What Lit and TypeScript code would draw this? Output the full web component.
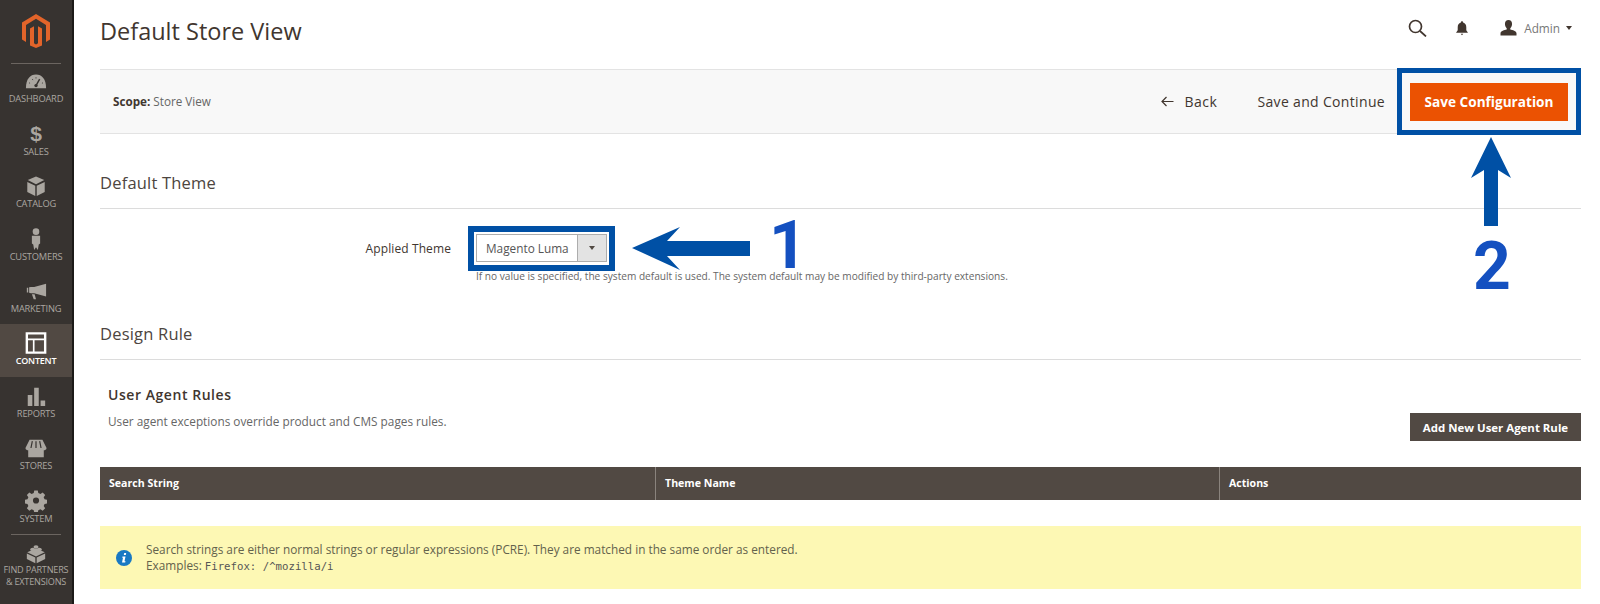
import { LitElement, html, css, svg } from "lit";
import { customElement } from "lit/decorators.js";

const navItems = [
  { label: ["DASHBOARD"], icon: svg`<path d="M1 20C1 10 5.500 5 12 5s11 5 11 15z" fill="currentColor"/><path d="M12 17l4-7" stroke="#373330" stroke-width="1.600"/><circle cx="12" cy="17" r="1.800" fill="#373330"/><path d="M4.500 14l1 .5M8 10l.7 1M12 8v1.200M19.500 14l-1 .5" stroke="#373330" stroke-width="1"/>` },
  { label: ["SALES"], icon: svg`<text x="12" y="20" text-anchor="middle" font-family="'Liberation Sans',sans-serif" font-weight="700" font-size="23" fill="currentColor">$</text>` },
  { label: ["CATALOG"], icon: svg`<path d="M12 1.500l9 4-9 4.500-9-4.500z" fill="currentColor"/><path d="M2.500 7.500l8.700 4.300V23l-8.700-4.500zM21.500 7.500l-8.700 4.300V23l8.700-4.500z" fill="currentColor"/>` },
  { label: ["CUSTOMERS"], icon: svg`<circle cx="12" cy="4" r="3.600" fill="currentColor"/><path d="M7.500 8.500h9V17l-1.500 1-1 6-2-3-2 3-1-6-1.500-1z" fill="currentColor"/>` },
  { label: ["MARKETING"], icon: svg`<path d="M23 4v14L10 14.500H6.500l-2-.5V8l2-.5H10z" fill="currentColor"/><path d="M2 8.500h1.500V13.500H2zM7.500 15.500h3l1.500 5.500H9.500z" fill="currentColor"/>` },
  { label: ["CONTENT"], active: true, icon: svg`<path d="M2 1.500h20v21H2z" fill="none" stroke="currentColor" stroke-width="2.600"/><path d="M2 8h20M9.500 8V22" stroke="currentColor" stroke-width="1.800"/>` },
  { label: ["REPORTS"], icon: svg`<path d="M3 11h5v12H3zM10 3h5v20h-5zM17 17h5v6h-5z" fill="currentColor"/>` },
  { label: ["STORES"], icon: svg`<path d="M5 3h14l4.500 9c0 2-2 2.500-3 2.500V22h-17v-7.500c-1 0-3-.5-3-2.500z" fill="currentColor"/><path d="M8 4.500l-1.500 7.500M12 4.500V12M16 4.500l1.500 7.500" stroke="#373330" stroke-width="1.300"/>` },
  { label: ["SYSTEM"], icon: svg`<path fill-rule="evenodd" fill="currentColor" d="M10 1h4l.6 3 2.400 1 2.600-1.700 2.800 2.800-1.700 2.600 1 2.400 3 .6v4l-3 .6-1 2.400 1.700 2.600-2.800 2.800-2.600-1.700-2.400 1-.6 3h-4l-.6-3-2.400-1-2.600 1.700-2.800-2.800 1.700-2.600-1-2.400-3-.6v-4l3-.6 1-2.400-1.700-2.600 2.800-2.800L7 5l2.400-1zM12 9a3.500 3.500 0 100 7 3.500 3.500 0 000-7z" transform="translate(.5 -.5) scale(.96)"/>` },
];

const divider = html`<div class="rule"></div>`;

@customElement("app-root")
export class AppRoot extends LitElement {
  static styles = css`
    :host { display: block; width: 1600px; height: 604px; overflow: hidden; position: relative; background: #fff; font-family: "Open Sans", sans-serif; color: #41362f; }
    .page { display: flex; height: 604px; }
    .side { width: 72px; flex: none; background: #373330; border-right: 2px solid #1c1a18; display: flex; flex-direction: column; align-items: stretch; }
    .logo { height: 63px; display: flex; justify-content: center; padding-top: 14px; box-sizing: border-box; flex: none; }
    .rule { height: 1px; background: #6b6560; margin: 0 11px; flex: none; position: relative; z-index: 1; }
    .nav { display: flex; flex-direction: column; height: 52.400px; align-items: center; flex: none; padding-top: 8px; box-sizing: border-box; color: #aaa6a0; font-size: 9.300px; line-height: 12px; letter-spacing: -0.2px; }
    .nav svg { width: 22px; height: 22px; margin-bottom: 1px; flex: none; }
    .nav.active { background: #514943; color: #fff; font-weight: 600; font-size: 9px; }
    .nav.first { margin-top: -1.600px; }
    .nav.last { height: 64px; padding-top: 9px; font-size: 9.100px; }
    .nav.last svg { width: 20px; height: 20px; margin-bottom: 0; }
    .nav.last span { white-space: nowrap; }
    .main { flex: 1; min-width: 0; padding: 0 19px 0 26px; display: flex; flex-direction: column; }
    .top { height: 69px; display: flex; align-items: center; flex: none; }
    .title { font-size: 23.500px; font-weight: 400; color: #41362f; margin: 0 0 6px; flex: 1; line-height: 1; }
    .top-icons { display: flex; align-items: center; padding: 0 9px 13px 0; color: #41362f; }
    .top-icons .search { width: 19px; height: 18px; margin-right: 29px; }
    .top-icons .bell { width: 12px; height: 15px; margin-right: 32px; }
    .top-icons .user { width: 17px; height: 16px; margin-right: 7px; }
    .admin { font-size: 11.800px; color: #777; }
    .caret { width: 0; height: 0; border: 3.500px solid transparent; border-top: 4px solid #41362f; border-bottom: 0; margin: 0 0 0 6px; }
    .bar { height: 65px; flex: none; box-sizing: border-box; background: #f8f8f8; border-top: 1px solid #e3e3e3; border-bottom: 1px solid #e3e3e3; display: flex; align-items: center; padding: 0 13px; font-size: 11.700px; color: #666; margin-bottom: 37px; }
    .bar b { color: #41362f; font-weight: 700; }
    .scope { flex: 1; padding-bottom: 1px; }
    .act { font-size: 14px; color: #41362f; letter-spacing: 0.33px; display: flex; align-items: center; }
    .back { margin-right: 40px; letter-spacing: 0.55px; }
    .back svg { width: 13px; height: 11px; margin-right: 10px; }
    .save { width: 158px; height: 38px; margin-left: 25px; background: #eb5202; color: #fff; font-weight: 700; font-size: 13.600px; display: flex; align-items: center; justify-content: center; }
    h2 { font-size: 16.500px; font-weight: 400; margin: 0; line-height: 24px; height: 37px; color: #4d4540; border-bottom: 1px solid #dcdcdc; letter-spacing: 0.2px; flex: none; }
    .row { display: flex; align-items: center; margin-top: 25px; height: 28px; flex: none; }
    .row label { width: 351px; text-align: right; font-size: 12px; color: #41362f; letter-spacing: 0.1px; }
    .select { margin-left: 25px; width: 131px; height: 28px; box-sizing: border-box; border: 1px solid #adadad; display: flex; background: #fff; font-size: 11.800px; color: #555; align-items: center; }
    .select span { flex: 1; padding-left: 9px; }
    .select i { width: 29px; height: 100%; background: #e3e3e3; border-left: 1px solid #adadad; display: flex; align-items: center; justify-content: center; box-sizing: border-box; }
    .select i::after { content: ""; border: 3.500px solid transparent; border-top: 4.500px solid #514943; border-bottom: 0; }
    .hint { margin: 8px 0 0 376px; font-size: 10.130px; line-height: 13px; height: 13px; color: #666; white-space: nowrap; flex: none; }
    .design { margin-top: 39px; }
    .rules { display: flex; align-items: flex-end; padding: 25px 0 0 8px; flex: none; }
    .rules > div:first-child { flex: 1; }
    .rules h3 { font-size: 14px; font-weight: 600; margin: 0 0 8px; line-height: 20px; letter-spacing: 0.55px; color: #41362f; }
    .rules p { margin: 0 0 12px; font-size: 11.800px; line-height: 16px; color: #666; }
    .add { width: 171px; height: 28px; background: #514943; color: #fff; font-size: 11.450px; font-weight: 700; display: flex; align-items: center; justify-content: center; flex: none; }
    .thead { display: grid; grid-template-columns: 555px 564px 1fr; height: 33px; background: #514943; color: #fff; font-size: 10.600px; font-weight: 700; margin-top: 26px; align-items: stretch; flex: none; }
    .thead div { display: flex; align-items: center; padding: 0 0 1px 9px; border-left: 1px solid #8a837d; }
    .thead div:first-child { border-left: 0; }
    .notice { margin-top: 26px; height: 63px; background: #fdf8b4; display: flex; align-items: center; padding-left: 16px; font-size: 11.800px; line-height: 16px; color: #63624c; flex: none; }
    .notice svg { width: 16px; height: 16px; margin-right: 14px; flex: none; }
    code { font-family: "DejaVu Sans Mono", monospace; font-size: 10.700px; color: #555; }
    .mark { position: absolute; box-sizing: border-box; border: 5px solid #0050a5; }
    .mark.one { border-width: 6px; }
    .anno { position: absolute; overflow: visible; }
    .digit { position: absolute; font-family: Roboto, sans-serif; font-weight: 700; color: #1450c0; line-height: 48px; height: 48px; font-size: 66px; }
  `;

  render() {
    return html`
      <div class="page">
        <aside class="side">
          <div class="logo">
            <svg width="32" height="34" viewBox="0 0 24 24" preserveAspectRatio="none"><path fill="#e2642a" d="M12 0L1.500 6v12l3 1.700V7.700L12 3.400l7.500 4.300v12l3-1.700V6z"/><path fill="#e2642a" d="M13.500 20.600l-1.500.9-1.500-.9V8.600l-3 1.700v12L12 24l4.500-1.700v-12l-3-1.700z"/></svg>
          </div>
          ${divider}
          ${navItems.map((n, i) => html`
            <div class="nav ${n.active ? "active" : ""} ${i === 0 ? "first" : ""}">
              <svg viewBox="0 0 24 24">${n.icon}</svg>
              <span>${n.label[0]}</span>
            </div>`)}
          ${divider}
          <div class="nav last">
            <svg viewBox="0 0 24 24"><path d="M12 5l10.500 5L12 15 1.500 10z" fill="currentColor"/><ellipse cx="8" cy="6.500" rx="3" ry="2" fill="currentColor"/><ellipse cx="12" cy="3.500" rx="3" ry="2" fill="currentColor"/><ellipse cx="16" cy="6.500" rx="3" ry="2" fill="currentColor"/><path d="M1 11.500l10.200 4.800V23L1 18zM23 11.500l-10.200 4.800V23L23 18z" fill="currentColor"/></svg>
            <span>FIND PARTNERS</span><span>&amp; EXTENSIONS</span>
          </div>
        </aside>
        <main class="main">
          <header class="top">
            <h1 class="title">Default Store View</h1>
            <div class="top-icons">
              <svg class="search" viewBox="0 0 19 18" fill="none" stroke="currentColor" stroke-width="1.700"><circle cx="7.500" cy="7.500" r="6"/><path d="M12 12l6 5.500"/></svg>
              <svg class="bell" viewBox="0 0 14 17"><path fill="currentColor" d="M7 0a1.300 1.300 0 011.300 1.500C10.800 2.200 12 4.300 12 7v3.500l2 3H0l2-3V7c0-2.700 1.200-4.800 3.700-5.500A1.300 1.300 0 017 0zM5.500 14.500h3L7 16.500z"/></svg>
              <svg class="user" viewBox="0 0 18 18"><path fill="currentColor" d="M9 0c2.500 0 4 1.800 4 4.500 0 2-1 4-2 4.800v1.400c2.500.7 7 1.600 7 4.300v2.500H0v-2.500c0-2.700 4.500-3.600 7-4.300V9.300c-1-.8-2-2.800-2-4.800C5 1.800 6.500 0 9 0z"/></svg>
              <span class="admin">Admin</span>
              <span class="caret"></span>
            </div>
          </header>
          <section class="bar">
            <div class="scope"><b>Scope:</b> Store View</div>
            <div class="act back">
              <svg viewBox="0 0 13 11" fill="none" stroke="currentColor" stroke-width="1.200"><path d="M12.500 5.500H1M5.500 1L1 5.500 5.500 10"/></svg>
              Back
            </div>
            <div class="act">Save and Continue</div>
            <div class="save">Save Configuration</div>
          </section>
          <h2>Default Theme</h2>
          <div class="row">
            <label>Applied Theme</label>
            <div class="select"><span>Magento Luma</span><i></i></div>
          </div>
          <div class="hint">If no value is specified, the system default is used. The system default may be modified by third-party extensions.</div>
          <h2 class="design">Design Rule</h2>
          <div class="rules">
            <div>
              <h3>User Agent Rules</h3>
              <p>User agent exceptions override product and CMS pages rules.</p>
            </div>
            <div class="add">Add New User Agent Rule</div>
          </div>
          <div class="thead"><div>Search String</div><div>Theme Name</div><div>Actions</div></div>
          <div class="notice">
            <svg viewBox="0 0 16 16"><circle cx="8" cy="8" r="8" fill="#1979c3"/><path fill="#fff" d="M8.200 3h2l-.4 2h-2zM6.500 6.500h3l-1 4.800h1l-.3 1.200h-3.200l1-4.800h-.8z"/></svg>
            <div>Search strings are either normal strings or regular expressions (PCRE). They are matched in the same order as entered.<br>Examples: <code>Firefox: /^mozilla/i</code></div>
          </div>
        </main>
      </div>
      <div class="mark" style="left:1397px;top:68px;width:184px;height:67px"></div>
      <div class="mark one" style="left:468px;top:226px;width:147px;height:45px"></div>
      <svg class="anno" style="left:631px;top:226px" width="120" height="46" viewBox="0 0 120 46"><path fill="#0050a5" d="M1 22L49 1 36 15h83v15H36l13 14z"/></svg>
      <svg class="anno" style="left:1470px;top:137px" width="42" height="90" viewBox="0 0 42 90"><path fill="#0050a5" d="M21 0l20 41-13-8v56H14V33L1 41z"/></svg>
      <div class="digit" style="left:769px;top:222px">1</div>
      <div class="digit" style="left:1473px;top:243px">2</div>
    `;
  }
}
